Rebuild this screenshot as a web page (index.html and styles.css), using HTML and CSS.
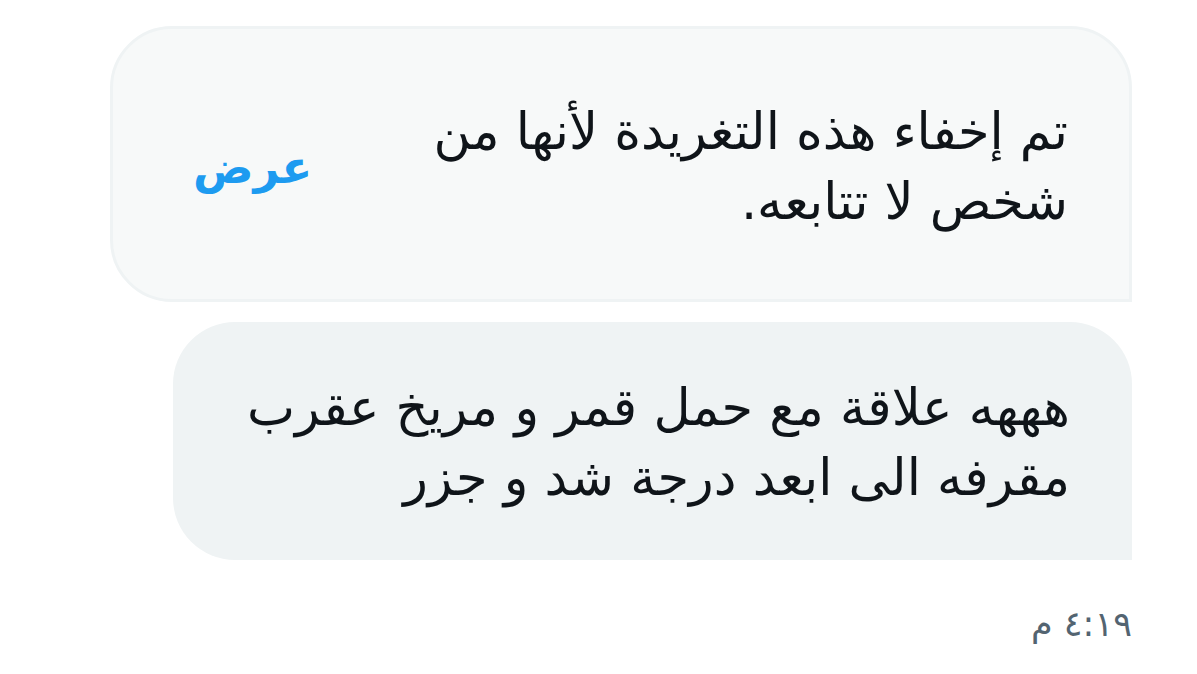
FILE: index.html
```html
<!DOCTYPE html>
<html lang="ar" dir="rtl">
<head>
<meta charset="utf-8">
<link rel="stylesheet" href="styles.css">
</head>
<body>
<div class="thread">
  <div class="bubble hidden-note">
    <div class="note-text">تم إخفاء هذه التغريدة لأنها من شخص لا تتابعه.</div>
    <a class="show-link" href="#">عرض</a>
  </div>
  <div class="bubble message">
    <div class="msg-text">هههه علاقة مع حمل قمر و مريخ عقرب مقرفه الى ابعد درجة شد و جزر</div>
  </div>
  <div class="time">٤:١٩ م</div>
</div>
</body>
</html>
```

FILE: styles.css
```css
html, body {
  margin: 0;
  padding: 0;
  background: #ffffff;
}
body {
  font-family: "DejaVu Sans", "Noto Sans", sans-serif;
  color: #0f1419;
}
.thread {
  display: flex;
  flex-direction: column;
  align-items: flex-start;
  padding: 26px 65px 0 0;
}
.bubble {
  box-sizing: border-box;
  border-radius: 62px 62px 0 62px;
}
.hidden-note {
  width: 1022px;
  height: 276px;
  background: #f7f9f9;
  border: 3px solid #eff3f4;
  border-bottom-right-radius: 0;
  display: flex;
  align-items: center;
  justify-content: space-between;
  padding: 6px 61px 0 80px;
}
.note-text {
  width: 650px;
  font-size: 51px;
  line-height: 70px;
}
.show-link {
  color: #1d9bf0;
  font-weight: bold;
  font-size: 45px;
  text-decoration: none;
}
.message {
  margin-top: 20px;
  width: 959px;
  height: 238px;
  background: #eff3f4;
  border-radius: 62px 62px 0 62px;
  display: flex;
  align-items: center;
  padding: 4px 62px 0 58px;
}
.msg-text {
  font-size: 51px;
  line-height: 70px;
}
.time {
  margin-top: 40px;
  color: #536471;
  font-size: 35px;
  line-height: 48px;
}
```
